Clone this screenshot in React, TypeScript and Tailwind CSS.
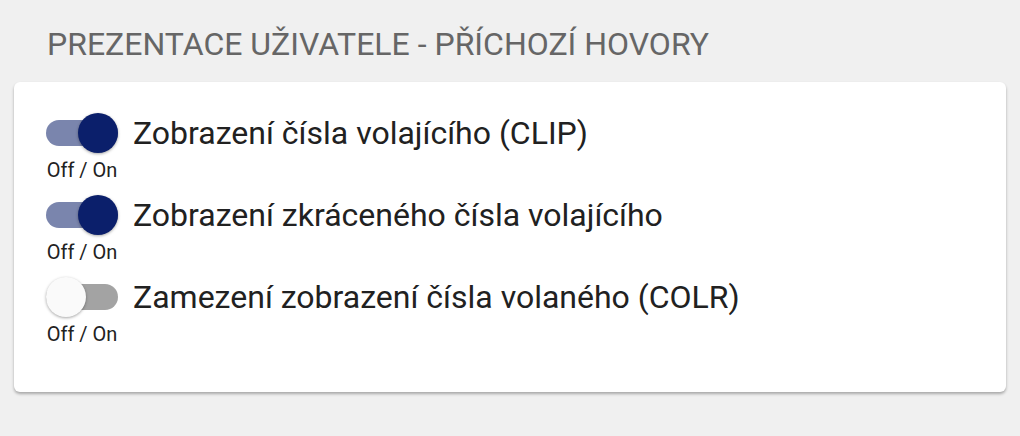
const rows = [
  { label: "Zobrazení čísla volajícího (CLIP)", on: true },
  { label: "Zobrazení zkráceného čísla volajícího", on: true },
  { label: "Zamezení zobrazení čísla volaného (COLR)", on: false },
];

function Toggle({ on }: { on: boolean }) {
  return (
    <div className="flex flex-col items-center w-[72px]">
      <div className="relative h-[40px] w-[72px] flex items-center">
        <div
          className={
            "h-[26px] w-[72px] rounded-full " +
            (on ? "bg-[#7a85ad]" : "bg-[#a3a3a3]")
          }
        />
        <div
          className={
            "absolute top-0 h-[40px] w-[40px] rounded-full shadow-[0_1px_3px_rgba(0,0,0,0.35)] " +
            (on ? "right-0 bg-[#0b1f6b]" : "left-0 bg-[#fafafa]")
          }
        />
      </div>
      <span className="mt-[7px] text-[20px] leading-[20px] text-[#222] whitespace-nowrap">Off / On</span>
    </div>
  );
}

export default function App() {
  return (
    <div className="min-h-[436px] bg-[#f0f0f0] px-[14px] pt-[24px] font-['Roboto',sans-serif]">
      <h2 className="pl-[33px] text-[32px] leading-[40px] text-[#666] uppercase">
        Prezentace uživatele - příchozí hovory
      </h2>
      <div className="mt-[18px] rounded-[6px] bg-white pl-[32px] pt-[31px] pb-[48px] shadow-[0_2px_3px_rgba(0,0,0,0.3)]">
        <div className="flex flex-col gap-[15px]">
          {rows.map((r) => (
            <div key={r.label} className="flex items-start gap-[15px]">
              <Toggle on={r.on} />
              <span className="text-[32px] leading-[40px] text-[#212121]">{r.label}</span>
            </div>
          ))}
        </div>
      </div>
    </div>
  );
}
